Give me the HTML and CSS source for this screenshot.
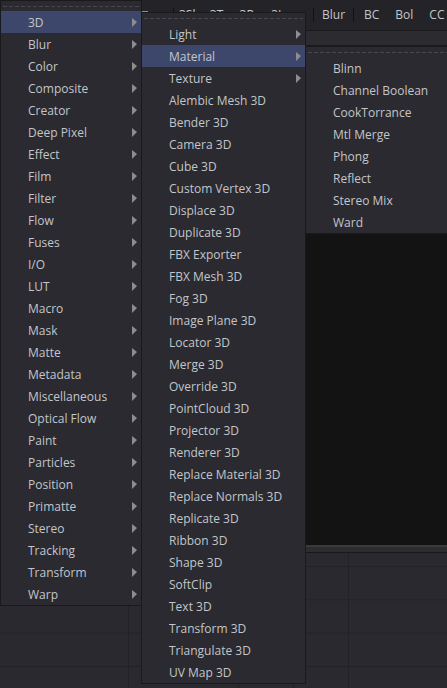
FILE: index.html
```html
<!DOCTYPE html>
<html>
<head>
<meta charset="utf-8">
<link rel="stylesheet" href="styles.css">
</head>
<body>
<div class="app">
  <div class="toolbar">
    <span class="tb-mark"></span>
    <div class="tb-hidden">
      <span class="tb-gap"></span>
      <span class="sep"></span>
      <span class="tb-btn">3Sh</span>
      <span class="tb-btn">3Tx</span>
      <span class="tb-btn">3Rn</span>
      <span class="tb-btn">3Im</span>
    </div>
    <span class="sep"></span>
    <span class="tb-btn">Blur</span>
    <span class="sep"></span>
    <span class="tb-btn first">BC</span>
    <span class="tb-btn">Bol</span>
    <span class="tb-btn">CC</span>
  </div>
  <div class="viewer-header"></div>
  <div class="viewer"></div>
  <div class="splitter"></div>
  <div class="node-editor"></div>
</div>

<div class="menu menu-main">
  <div class="tearoff"><div class="dash"></div></div>
  <div class="item sub active">3D</div>
  <div class="item sub">Blur</div>
  <div class="item sub">Color</div>
  <div class="item sub">Composite</div>
  <div class="item sub">Creator</div>
  <div class="item sub">Deep Pixel</div>
  <div class="item sub">Effect</div>
  <div class="item sub">Film</div>
  <div class="item sub">Filter</div>
  <div class="item sub">Flow</div>
  <div class="item sub">Fuses</div>
  <div class="item sub">I/O</div>
  <div class="item sub">LUT</div>
  <div class="item sub">Macro</div>
  <div class="item sub">Mask</div>
  <div class="item sub">Matte</div>
  <div class="item sub">Metadata</div>
  <div class="item sub">Miscellaneous</div>
  <div class="item sub">Optical Flow</div>
  <div class="item sub">Paint</div>
  <div class="item sub">Particles</div>
  <div class="item sub">Position</div>
  <div class="item sub">Primatte</div>
  <div class="item sub">Stereo</div>
  <div class="item sub">Tracking</div>
  <div class="item sub">Transform</div>
  <div class="item sub">Warp</div>
</div>

<div class="menu menu-3d">
  <div class="tearoff"><div class="dash"></div></div>
  <div class="item sub">Light</div>
  <div class="item sub active">Material</div>
  <div class="item sub">Texture</div>
  <div class="item">Alembic Mesh 3D</div>
  <div class="item">Bender 3D</div>
  <div class="item">Camera 3D</div>
  <div class="item">Cube 3D</div>
  <div class="item">Custom Vertex 3D</div>
  <div class="item">Displace 3D</div>
  <div class="item">Duplicate 3D</div>
  <div class="item">FBX Exporter</div>
  <div class="item">FBX Mesh 3D</div>
  <div class="item">Fog 3D</div>
  <div class="item">Image Plane 3D</div>
  <div class="item">Locator 3D</div>
  <div class="item">Merge 3D</div>
  <div class="item">Override 3D</div>
  <div class="item">PointCloud 3D</div>
  <div class="item">Projector 3D</div>
  <div class="item">Renderer 3D</div>
  <div class="item">Replace Material 3D</div>
  <div class="item">Replace Normals 3D</div>
  <div class="item">Replicate 3D</div>
  <div class="item">Ribbon 3D</div>
  <div class="item">Shape 3D</div>
  <div class="item">SoftClip</div>
  <div class="item">Text 3D</div>
  <div class="item">Transform 3D</div>
  <div class="item">Triangulate 3D</div>
  <div class="item">UV Map 3D</div>
</div>

<div class="menu menu-mat">
  <div class="tearoff"><div class="dash"></div></div>
  <div class="item">Blinn</div>
  <div class="item">Channel Boolean</div>
  <div class="item">CookTorrance</div>
  <div class="item">Mtl Merge</div>
  <div class="item">Phong</div>
  <div class="item">Reflect</div>
  <div class="item">Stereo Mix</div>
  <div class="item">Ward</div>
</div>
</body>
</html>
```

FILE: styles.css
```css
html, body {
  margin: 0;
  padding: 0;
}
body {
  background: #28282e;
  font-family: "Open Sans", "Noto Sans", sans-serif;
  font-size: 12px;
  color: #c3c6cb;
  overflow: hidden;
  width: 447px;
  height: 688px;
  position: relative;
}
.app {
  height: 688px;
  display: flex;
  flex-direction: column;
}
.toolbar {
  height: 30px;
  flex: none;
  background: #242428;
  border-bottom: 1px solid #1b1b1e;
  display: flex;
  align-items: center;
  white-space: nowrap;
  overflow: hidden;
}
.tb-mark {
  flex: none;
  width: 6px;
  height: 1px;
  margin-left: 142px;
  margin-top: -8px;
  background: #5fb04a;
}
.tb-hidden {
  flex: none;
  width: 165px;
  display: flex;
  align-items: center;
  overflow: hidden;
}
.tb-gap {
  flex: none;
  width: 25px;
}
.sep {
  flex: none;
  width: 1px;
  height: 14px;
  background: #111114;
}
.tb-btn {
  flex: none;
  padding: 0 8px;
  line-height: 30px;
}
.tb-hidden .tb-btn {
  padding: 0 5px;
}
.tb-btn.first {
  margin-left: 2px;
}
.viewer-header {
  height: 14px;
  flex: none;
  background: #2b2b30;
  border-bottom: 1px solid #1b1b1e;
}
.viewer {
  height: 499px;
  flex: none;
  background: #131313;
}
.splitter {
  flex: none;
  height: 5px;
  background: #2c2c31;
  border-top: 2px solid #3a3a3e;
  border-bottom: 1px solid #19191b;
}
.node-editor {
  flex: 1;
  background-color: #29292f;
  background-image:
    linear-gradient(to right, #212126 1px, transparent 1px),
    linear-gradient(to bottom, #212126 1px, transparent 1px);
  background-size: 55px 33.33px;
  background-position: 18px 13px;
}

.menu {
  position: absolute;
  background: #2a2a30;
  border: 1px solid #1a1a1d;
  display: flex;
  flex-direction: column;
}
.menu-main {
  left: 0;
  top: 0;
  width: 140px;
}
.menu-3d {
  left: 141px;
  top: 12px;
  width: 163px;
}
.menu-mat {
  left: 305px;
  top: 46px;
  width: 200px;
}
.tearoff {
  height: 10px;
  box-sizing: border-box;
  padding: 5px 2px 0;
}
.dash {
  height: 1px;
  background: repeating-linear-gradient(to right, #47474d 0 4px, transparent 4px 6px);
}
.item {
  height: 22px;
  display: flex;
  align-items: center;
  justify-content: space-between;
  padding: 0 4px 0 27px;
  white-space: nowrap;
}
.item.active {
  background: #3d476c;
}
.item.sub::after {
  content: "";
  width: 0;
  height: 0;
  border-left: 5px solid #8d8d90;
  border-top: 4px solid transparent;
  border-bottom: 5px solid transparent;
  margin-top: 1px;
}
```
